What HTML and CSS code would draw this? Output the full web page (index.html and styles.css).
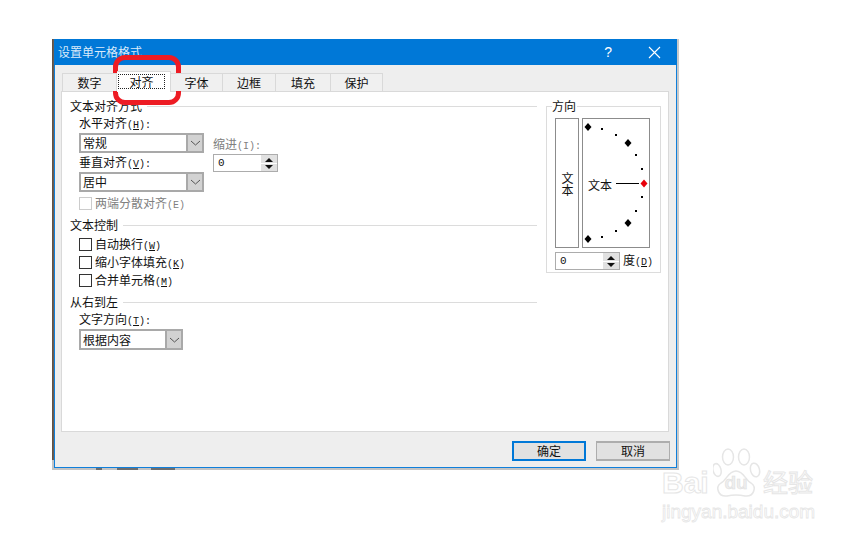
FILE: index.html
```html
<!DOCTYPE html>
<html lang="zh-CN">
<head>
<meta charset="utf-8">
<title>设置单元格格式</title>
<link rel="stylesheet" href="styles.css">
</head>
<body>
<div class="stage">
  <div class="backdrop">
    <div class="dialog">
      <header class="titlebar">
        <span class="title">设置单元格格式</span>
        <span class="help">?</span>
        <svg class="close" width="13" height="13" viewBox="0 0 13 13"><path d="M1 1L12 12M12 1L1 12" stroke="#fff" stroke-width="1.1" fill="none"/></svg>
      </header>
      <div class="body">
        <div class="tabs">
          <div class="tab w55">数字</div>
          <div class="tab active"><span class="focus">对齐</span></div>
          <div class="tab w52">字体</div>
          <div class="tab w53">边框</div>
          <div class="tab w55">填充</div>
          <div class="tab w52">保护</div>
        </div>
        <div class="panel">
          <div class="left">
            <div class="group-head"><span>文本对齐方式</span><i></i></div>
            <div class="indent">
              <div class="label l-first">水平对齐<span class="k">(<u>H</u>):</span></div>
              <div class="align-row">
                <div class="stack">
                  <div class="select s125"><span>常规</span><b class="arrow"><svg width="11" height="6" viewBox="0 0 11 6"><path d="M1 1L5.5 5L10 1" stroke="#555" fill="none"/></svg></b></div>
                  <div class="label">垂直对齐<span class="k">(<u>V</u>):</span></div>
                  <div class="select s125"><span>居中</span><b class="arrow"><svg width="11" height="6" viewBox="0 0 11 6"><path d="M1 1L5.5 5L10 1" stroke="#555" fill="none"/></svg></b></div>
                </div>
                <div class="indent-col">
                  <div class="label muted">缩进<span class="k">(I):</span></div>
                  <div class="spin s65">
                    <span class="val">0</span>
                    <span class="spin-btns"><svg width="16" height="16" viewBox="0 0 16 16"><rect width="16" height="16" fill="#e1e1e1"/><path d="M8 3L12 7H4Z M8 14L4 10H12Z" fill="#111"/><path d="M0 8.5H16" stroke="#fff"/></svg></span>
                  </div>
                </div>
              </div>
              <div class="check disabled c-just"><i class="box"></i><span>两端分散对齐<span class="k">(E)</span></span></div>
            </div>
            <div class="group-head g2"><span>文本控制</span><i></i></div>
            <div class="indent">
              <div class="check c-a"><i class="box"></i><span>自动换行<span class="k">(<u>W</u>)</span></span></div>
              <div class="check"><i class="box"></i><span>缩小字体填充<span class="k">(<u>K</u>)</span></span></div>
              <div class="check"><i class="box"></i><span>合并单元格<span class="k">(<u>M</u>)</span></span></div>
            </div>
            <div class="group-head g3"><span>从右到左</span><i></i></div>
            <div class="indent">
              <div class="label l-dir">文字方向<span class="k">(<u>T</u>):</span></div>
              <div class="select s104"><span>根据内容</span><b class="arrow"><svg width="11" height="6" viewBox="0 0 11 6"><path d="M1 1L5.5 5L10 1" stroke="#555" fill="none"/></svg></b></div>
            </div>
          </div>
          <section class="orient">
            <span class="legend">方向</span>
            <div class="orient-boxes">
              <div class="vtext"><span class="vword">文本</span></div>
              <div class="dial">
                <span class="dial-text">文本</span>
                <svg class="dial-marks" width="68" height="130" viewBox="0 0 68 130">
                  <path d="M34 65.500H57" stroke="#000"/>
                  <g fill="#000">
                    <path d="M6 5L9.500 9L6 13L2.500 9Z"/>
                    <path d="M46 21L49.500 25L46 29L42.500 25Z"/>
                    <path d="M46 101L49.500 105L46 109L42.500 105Z"/>
                    <path d="M6 117L9.500 121L6 125L2.500 121Z"/>
                    <rect x="19" y="10" width="2" height="2"/>
                    <rect x="33" y="16" width="2" height="2"/>
                    <rect x="53" y="36" width="2" height="2"/>
                    <rect x="59" y="50" width="2" height="2"/>
                    <rect x="59" y="78" width="2" height="2"/>
                    <rect x="53" y="92" width="2" height="2"/>
                    <rect x="33" y="112" width="2" height="2"/>
                    <rect x="19" y="118" width="2" height="2"/>
                  </g>
                  <path d="M62 61.500L65.500 65.500L62 69.500L58.500 65.500Z" fill="#e8000b"/>
                </svg>
              </div>
            </div>
            <div class="deg-row">
              <div class="spin s65">
                <span class="val">0</span>
                <span class="spin-btns"><svg width="16" height="16" viewBox="0 0 16 16"><rect width="16" height="16" fill="#e1e1e1"/><path d="M8 3L12 7H4Z M8 14L4 10H12Z" fill="#111"/><path d="M0 8.5H16" stroke="#fff"/></svg></span>
              </div>
              <span class="deg">度<span class="k">(<u>D</u>)</span></span>
            </div>
          </section>
        </div>
        <footer class="actions">
          <button class="btn primary">确定</button>
          <button class="btn">取消</button>
        </footer>
      </div>
    </div>
    <div class="scrap"><i class="b6"></i><i class="b21"></i><i class="b24"></i></div>
  </div>
  <div class="callout"></div>
  <div class="watermark">
    <div class="wm-top">
      <span class="wm-bai">Bai</span>
      <span class="wm-paw">
        <svg width="48" height="50" viewBox="0 0 48 50" fill="#fff" stroke="#e6e6e6" stroke-width="1.500">
          <ellipse cx="4" cy="22" rx="4" ry="6.500" transform="rotate(-15 4 22)"/>
          <ellipse cx="15" cy="9" rx="5.500" ry="8"/>
          <ellipse cx="31" cy="9" rx="5.500" ry="8"/>
          <ellipse cx="42" cy="22" rx="4.500" ry="7" transform="rotate(-15 42 22)"/>
          <path d="M23 23C15 23 14 32 8 35C2 39 5 49 14 48C19 47 27 47 32 48C41 49 44 39 38 35C32 32 31 23 23 23Z"/>
        </svg>
        <span class="wm-du">du</span>
      </span>
      <span class="wm-cn">经验</span>
    </div>
    <div class="wm-url">jingyan.baidu.com</div>
  </div>
</div>
</body>
</html>
```
FILE: styles.css
```css
* { box-sizing: border-box; }
html, body { margin: 0; padding: 0; background: #fff; }
body {
  width: 864px;
  height: 540px;
  overflow: hidden;
  font-family: "Noto Sans CJK SC", "Liberation Sans", sans-serif;
  font-size: 12px;
  color: #111;
}
.stage { position: relative; width: 864px; height: 540px; padding: 39px 0 0 52px; }
.backdrop {
  position: relative;
  width: 627px;
  height: 431px;
  padding: 0 2px 2px;
  background:
    linear-gradient(180deg, transparent 421px, #c4c4c4 421px),
    linear-gradient(90deg, #5d4c40 0, #6f6358 2px, #c9c9c9 2px, #c9c9c9 100%);
}
.dialog {
  width: 623px;
  height: 429px;
  border: 1px solid #0f7fdb;
  background: #eee;
  display: flex;
  flex-direction: column;
}
.titlebar {
  height: 26px;
  margin: -1px -1px 0;
  padding: 0 16px 0 4px;
  background: #0078d7;
  color: #d9eafa;
  display: flex;
  align-items: center;
  flex: none;
  line-height: 26px;
}
.title { flex: 1; }
.help { color: #fff; font: 14px "Liberation Sans", sans-serif; margin-right: 36px; }
.body { flex: 1; display: flex; flex-direction: column; padding: 6px 8px 0 6px; }
.tabs { display: flex; height: 20px; padding-left: 1px; align-items: flex-end; flex: none; position: relative; z-index: 1; }
.tab {
  height: 18px;
  padding-top: 1px;
  border: 1px solid #d9d9d9;
  border-left: 0;
  border-bottom: 0;
  background: #f0f0f0;
  display: flex;
  align-items: center;
  justify-content: center;
  line-height: 18px;
}
.tab:first-child { border-left: 1px solid #d9d9d9; }
.w52 { width: 52px; }
.w53 { width: 53px; }
.w55 { width: 55px; }
.tab.active {
  width: 54px;
  height: 21px;
  margin-bottom: -1px;
  background: #fff;
  padding: 2px 5px 3px 1px;
}
.focus {
  flex: 1;
  height: 15px;
  outline: 1px dotted #222;
  outline-offset: -1px;
  text-align: center;
  line-height: 16px;
}
.panel {
  height: 341px;
  width: 608px;
  background: #fff;
  border: 1px solid #d9d9d9;
  display: flex;
  flex: none;
}
.left { width: 476px; padding: 6px 1px 0 8px; flex: none; }
.group-head { display: flex; align-items: center; height: 16px; line-height: 16px; }
.group-head i { flex: 1; height: 1px; background: #dcdcdc; margin-left: 5px; }
.g2 { margin-top: 5px; }
.g3 { margin-top: 5px; }
.indent { padding-left: 9px; }
.label { height: 19px; line-height: 17px; }
.l-first { line-height: 18px; }
.l-dir { height: 19px; line-height: 18px; }
.muted { color: #808080; }
.k { font: 10px "Liberation Mono", monospace; }
.align-row { display: flex; }
.stack { width: 134px; flex: none; }
.indent-col { padding-top: 2px; }
.select {
  height: 20px;
  border: 2px solid #a9a9a9;
  border-right: 0;
  background: #fff;
  display: flex;
  justify-content: space-between;
  line-height: 16px;
  padding-left: 2px;
}
.s125 { width: 125px; }
.s104 { width: 104px; height: 21px; line-height: 17px; }
.arrow {
  width: 18px;
  margin: -2px 0;
  background: #d2d2d2;
  border: 2px solid #a9a9a9;
  display: flex;
  align-items: center;
  justify-content: center;
}
.spin {
  height: 18px;
  border: 1px solid #acacac;
  background: #fff;
  display: flex;
  justify-content: space-between;
  padding-left: 4px;
  line-height: 16px;
  font-family: "Liberation Mono", monospace;
  font-size: 11px;
}
.s65 { width: 65px; }
.spin-btns { display: flex; }
.check { height: 18px; display: flex; align-items: center; }
.check > span { padding-bottom: 2px; }
.box { width: 13px; height: 13px; border: 1px solid #333; background: #fff; margin-right: 3px; flex: none; }
.disabled { color: #808080; }
.disabled .box { border-color: #ccc; }
.c-just { margin-top: 2px; }
.c-a { margin-top: 2px; }
.orient {
  position: relative;
  width: 115px;
  height: 167px;
  margin: 14px 0 0 8px;
  border: 1px solid #dcdcdc;
  padding: 11px 0 0 8px;
}
.legend {
  position: absolute;
  left: 5px;
  top: -8px;
  padding: 0 1px 0 0;
  line-height: 14px;
  background: #fff;
}
.orient-boxes { display: flex; gap: 3px; height: 130px; }
.vtext {
  width: 24px;
  border: 1px solid #8c8c8c;
  display: flex;
  align-items: center;
  justify-content: center;
}
.vword { writing-mode: vertical-rl; text-orientation: upright; line-height: 14px; padding-top: 1px; }
.dial {
  position: relative;
  width: 68px;
  border: 1px solid #8c8c8c;
  display: flex;
  align-items: center;
  padding-left: 5px;
}
.dial-text { line-height: 14px; padding-top: 3px; }
.dial-marks { position: absolute; left: -1px; top: -1px; }
.deg-row { display: flex; align-items: center; margin-top: 4px; gap: 3px; }
.deg { line-height: 16px; padding-bottom: 2px; }
.actions { flex: 1; display: flex; justify-content: flex-end; padding: 9px 0 0; gap: 10px; margin-right: -2px; }
.btn {
  width: 74px;
  height: 20px;
  padding: 0;
  background: #e1e1e1;
  border: 1px solid #adadad;
  border-width: 2px 1px;
  font: inherit;
  color: #111;
  line-height: 16px;
}
.primary { border: 2px solid #0078d7; }
.scrap {
  position: absolute;
  left: 44px;
  bottom: 0;
  height: 2px;
  display: flex;
}
.scrap i { display: block; height: 2px; background: #6e6e6e; }
.b6 { width: 6px; }
.b21 { width: 21px; margin-left: 15px; }
.b24 { width: 24px; margin-left: 13px; }
.callout {
  position: absolute;
  left: 113px;
  top: 55px;
  width: 68px;
  height: 50px;
  border: 5px solid #ed1c24;
  border-radius: 12px;
}
.watermark {
  position: absolute;
  left: 662px;
  top: 444px;
  width: 156px;
  color: #fff;
}
.wm-top { display: flex; align-items: flex-end; height: 54px; }
.wm-bai {
  font: bold 30px/30px "Liberation Sans", sans-serif;
  -webkit-text-stroke: 1px #e6e6e6;
  width: 51px;
  flex: none;
}
.wm-paw { position: relative; width: 48px; height: 50px; flex: none; }
.wm-paw svg { display: block; }
.wm-du {
  position: absolute;
  left: 8px;
  top: 25px;
  width: 30px;
  text-align: center;
  font: bold 19px/20px "Liberation Sans", sans-serif;
  color: #eee;
  -webkit-text-stroke: 0.5px #ddd;
}
.wm-cn {
  font-size: 25px;
  line-height: 34px;
  color: #fff;
  -webkit-text-stroke: 1px #e6e6e6;
  white-space: nowrap;
  margin-left: 2px;
  flex: none;
}
.wm-url {
  font: 19px/20px "Liberation Sans", sans-serif;
  color: #fff;
  -webkit-text-stroke: 0.8px #e6e6e6;
  white-space: nowrap;
  margin-top: 4px;
}
```
